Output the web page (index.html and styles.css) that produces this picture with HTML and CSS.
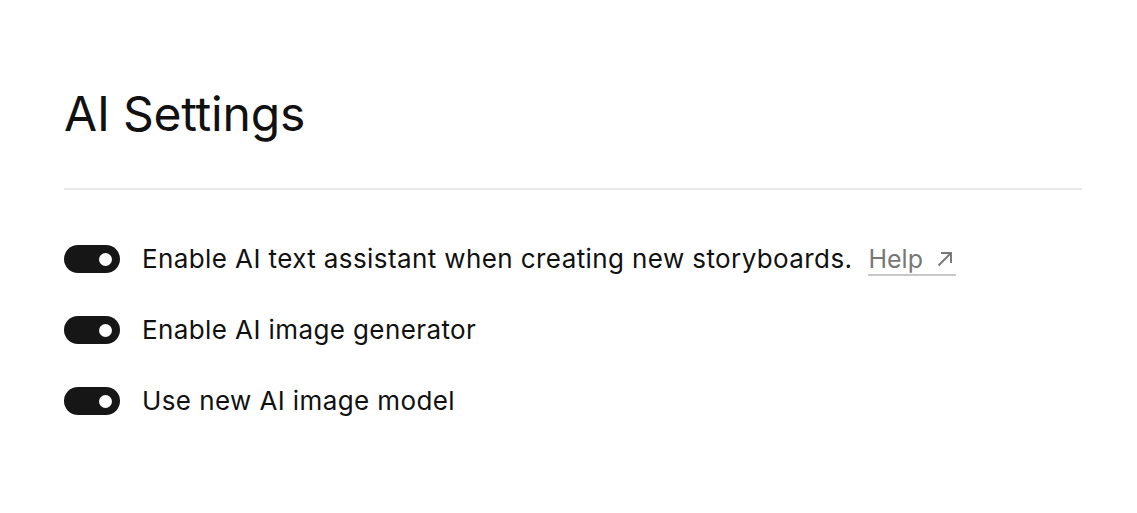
FILE: index.html
```html
<!DOCTYPE html>
<html>
<head>
<meta charset="utf-8">
<link rel="stylesheet" href="styles.css">
</head>
<body>
<main class="page">
  <h1 class="title">AI Settings</h1>
  <hr class="divider">
  <ul class="settings">
    <li class="row">
      <span class="toggle"><span class="knob"></span></span>
      <span class="label">Enable AI text assistant when creating new storyboards.</span>
      <a class="help" href="#">Help<svg class="arrow" width="18" height="18" viewBox="0 0 18 18" aria-hidden="true"><path d="M2.5 15.5 L15 3 M5 3 H15 V13" fill="none" stroke="#777" stroke-width="1.9"/></svg></a>
    </li>
    <li class="row">
      <span class="toggle"><span class="knob"></span></span>
      <span class="label">Enable AI image generator</span>
    </li>
    <li class="row">
      <span class="toggle"><span class="knob"></span></span>
      <span class="label">Use new AI image model</span>
    </li>
  </ul>
</main>
</body>
</html>
```

FILE: styles.css
```css
html, body { margin: 0; padding: 0; background: #fff; }
body { font-family: Inter, "Noto Sans", sans-serif; color: #111; }
.page { padding: 0 55px 0 64px; }
.title {
  margin: 0;
  padding-top: 85px;
  font-size: 48px;
  font-weight: 400;
  line-height: 58px;
  letter-spacing: -0.2px;
}
.divider {
  border: 0;
  border-top: 2px solid #e8e8e8;
  margin: 45px 0 0 0;
}
.settings { list-style: none; margin: 0; padding: 53px 0 0 0; display: flex; flex-direction: column; gap: 39px; }
.row { display: flex; align-items: center; line-height: 32px; }
.toggle {
  width: 56px; height: 28px; border-radius: 14px; background: #161616;
  display: flex; align-items: center; justify-content: flex-end; padding-right: 8px; box-sizing: border-box;
  flex: none;
}
.knob { width: 13px; height: 13px; border-radius: 50%; background: #fff; }
.label { margin-left: 22px; font-size: 26px; letter-spacing: 0.4px; }
.help {
  margin-left: 16px; font-size: 25px; color: #777;
  text-decoration: none; border-bottom: 2px solid #c8c8c8; line-height: 30px;
  display: inline-flex; align-items: center; gap: 13px; padding-right: 2px;
  position: relative; top: 1px;
}
.arrow { display: block; }
```
